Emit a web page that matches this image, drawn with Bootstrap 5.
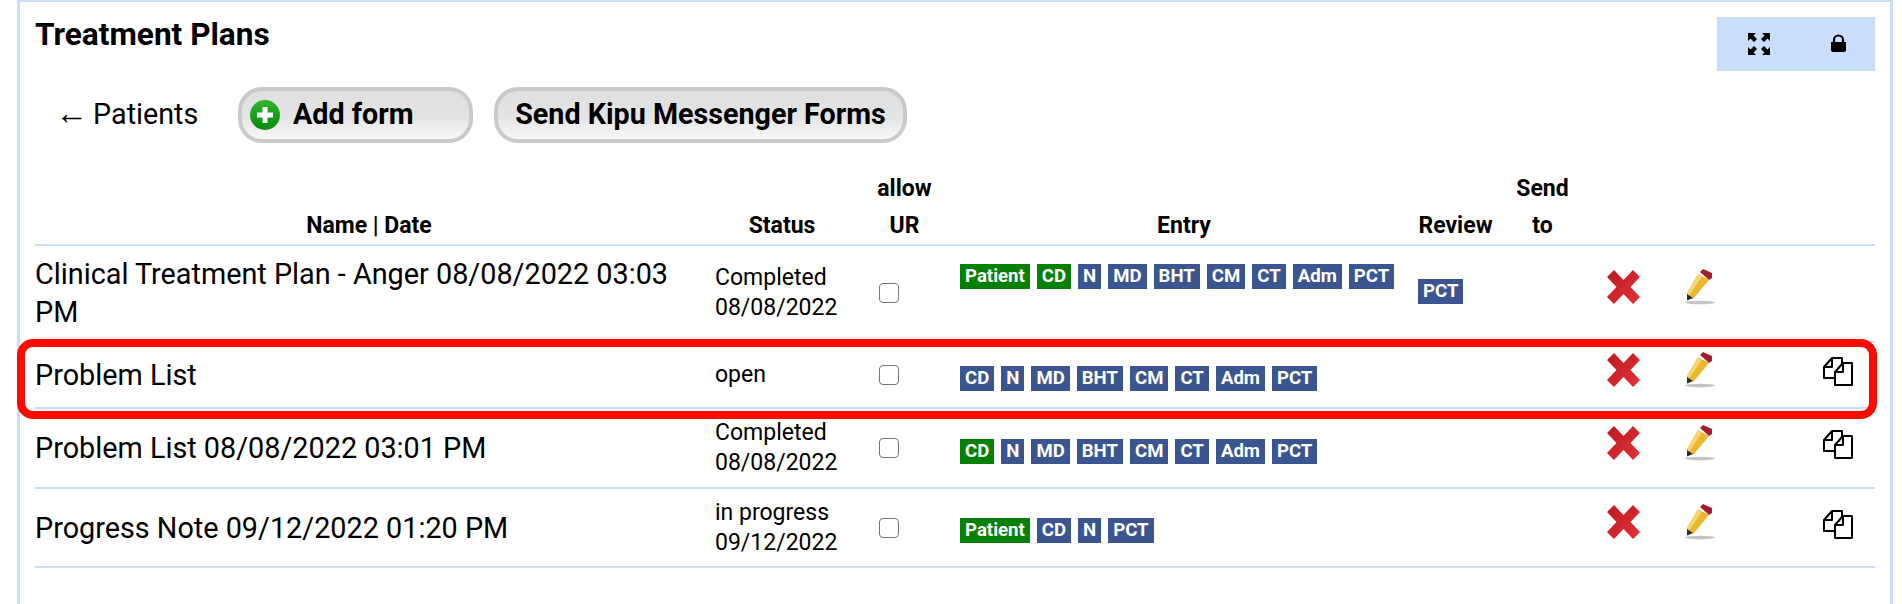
<!DOCTYPE html>
<html lang="en">
<head>
    <meta charset="UTF-8">
    <title>Treatment Plans</title>
    <link href="https://cdn.jsdelivr.net/npm/bootstrap@5.3.0/dist/css/bootstrap.min.css" rel="stylesheet">
    <style>
        body { font-family: Roboto, "Liberation Sans", sans-serif; color: #000; background: #fff; overflow: hidden; }
        .panel-box { margin-left: 17px; width: 1876px; height: 604px; border: 3px solid #c9defb; border-top-width: 2px; border-bottom: 0; padding: 0 15px; }
        .panel-title { font-size: 31.6px; font-weight: 700; line-height: 34px; margin: 0; padding-top: 16px; }
        .tool-box { width: 158px; height: 54px; background: #c9defb; margin-top: 15px; }
        .expand-icon { margin-left: 30px; }
        .lock-icon { margin-left: 60px; margin-bottom: 2px; }
        .top-head { height: 85px; }
        .back-link { font-size: 28.7px; width: 203px; padding-left: 20px; color: #000; text-decoration: none; white-space: nowrap; }
        .back-arrow { font-size: 33px; line-height: 1; margin-right: -2px; }
        .pill-btn { height: 56px; border: 4px solid #cacaca; border-radius: 24px; background: linear-gradient(#dfdfdf, #e4e4e4 55%, #f8f8f8); font-size: 28.7px; font-weight: 700; color: #000; padding: 0; }
        .pill-add { width: 235px; padding-left: 8px; gap: 13px; }
        .pill-send { width: 413px; margin-left: 21px; justify-content: center; }
        .plan-wrap { position: relative; }
        .plan-table { table-layout: fixed; width: 1840px; margin: 0; color: #000; }
        .col-name { width: 668px; }
        .col-status { width: 158px; }
        .col-ur { width: 87px; }
        .col-entry { width: 458px; }
        .col-review { width: 99px; }
        .col-send { width: 75px; }
        .col-del { width: 91px; }
        .col-edit { width: 140px; }
        .col-copy { width: 64px; }
        .plan-table th { font-size: 23px; font-weight: 700; line-height: 37px; text-align: center; vertical-align: bottom; padding: 0 4px; border-bottom: 2px solid #c9defb; height: 102px; }
        .plan-table th.entry-th { padding: 0 0 0 14px; }
        .plan-table td { padding: 0 12px; vertical-align: middle; border-bottom: 2px solid #c9defb; }
        .row-a { height: 97px; }
        .row-b { height: 66px; }
        .row-c { height: 80px; }
        .row-d { height: 79px; }
        .row-a td { padding-bottom: 2px; }
        .plan-table td.plan-name { font-size: 28.8px; line-height: 38px; padding-left: 0; }
        .plan-status { font-size: 23px; line-height: 30px; }
        .plan-table td.plan-check { padding-left: 18px; }
        .plan-check input { display: block; width: 20px; height: 20px; margin: 0; border: 1.5px solid #767676; border-radius: 4px; appearance: none; background: #fff; }
        .tag-list { display: flex; gap: 7px; }
        .tag-item { display: block; height: 25px; line-height: 25px; padding: 0 5px; background: #3b5590; color: #fff; font-size: 18.6px; font-weight: 700; text-align: center; }
        .tag-item.is-done { background: #068006; }
        .plan-table td.tags-low { padding-top: 6px; }
        .plan-table td.tags-high { padding-bottom: 34px; }
        .plan-table td.review-low { padding-bottom: 5px; }
        .row-icon { display: block; margin-bottom: 11px; filter: blur(.5px); }
        .row-copy { display: block; margin-bottom: 7px; }
        .plan-table td.x-cell { padding-left: 27px; }
        .red-mark { position: absolute; left: -18px; top: 196px; width: 1860px; height: 80px; border: 8px solid #ff0a00; border-radius: 16px; pointer-events: none; }
    </style>
</head>
<body>
    <svg width="0" height="0" class="position-absolute">
        <defs>
            <linearGradient id="rd" x1="0" y1="0" x2="1" y2="1"><stop offset="0" stop-color="#b81c1c"/><stop offset="1" stop-color="#e6303a"/></linearGradient>
            <linearGradient id="gr" x1="0" y1="0" x2="0" y2="1"><stop offset="0" stop-color="#2fb52f"/><stop offset="1" stop-color="#058a0c"/></linearGradient>
            <symbol id="del-icon" viewBox="0 0 33 34"><path d="M0 7l7-7 9.500 10L26 0l7 7-9.500 10L33 27l-7 7-9.500-10L7 34l-7-7 9.500-10z" fill="url(#rd)"/></symbol>
            <symbol id="edit-icon" viewBox="0 0 32 36"><ellipse cx="17" cy="33.500" rx="15" ry="1.800" fill="#c4c4c4"/><path d="M15 5l11 6-15 18-7 2v-7z" fill="#edb62f"/><path d="M15 5l4 2.500L6 27l-2 4v-7z" fill="#f6d574"/><path d="M17 3l3-3 9 4v5l-3 2z" fill="#a31f2e"/><path d="M4 25l6 4-6 2.500z" fill="#2b2b2b"/></symbol>
            <symbol id="copy-icon" viewBox="0 0 30 29"><g fill="#fff" stroke="#000" stroke-width="2" stroke-linejoin="round"><path d="M19 7V1H9L1 10v11h11z"/><path d="M9 1v9H1" fill="none"/><path d="M20 6h9v22H12V15z"/><path d="M20 6v9h-8" fill="none"/></g></symbol>
        </defs>
    </svg>
    <div class="panel-box">
        <div class="d-flex justify-content-between align-items-start top-head">
            <h1 class="panel-title">Treatment Plans</h1>
            <div class="tool-box d-flex align-items-center">
                <svg class="expand-icon" width="24" height="24" viewBox="0 0 24 24">
                    <path d="M1 1h8L6.500 3.500 10 7 7 10 3.500 6.500 1 9zM23 1h-8l2.500 2.500L14 7l3 3 3.500-3.500L23 9zM1 23h8l-2.500-2.500L10 17l-3-3-3.500 3.500L1 15zM23 23h-8l2.500-2.500L14 17l3-3 3.500 3.500L23 15z" fill="#000"/>
                </svg>
                <svg class="lock-icon" width="15" height="18" viewBox="0 0 15 18">
                    <path d="M0 8h15v8a2 2 0 0 1-2 2H2a2 2 0 0 1-2-2z" fill="#000"/>
                    <path d="M3 8V6a4.500 4.500 0 0 1 9 0v2" fill="none" stroke="#000" stroke-width="2.200"/>
                </svg>
            </div>
        </div>
        <div class="d-flex align-items-center">
            <a class="back-link" href="#"><span class="back-arrow">←</span> Patients</a>
            <button class="pill-btn pill-add d-flex align-items-center" type="button">
                <svg width="30" height="30" viewBox="0 0 30 30">
                    <circle cx="15" cy="15" r="15" fill="url(#gr)"/>
                    <path d="M12.500 7h5v5.500H23v5h-5.500V23h-5v-5.500H7v-5h5.500z" fill="#fff"/>
                </svg>
                <span>Add form</span>
            </button>
            <button class="pill-btn pill-send d-flex align-items-center" type="button">Send Kipu Messenger Forms</button>
        </div>
        <div class="plan-wrap">
            <table class="plan-table">
                <colgroup>
                    <col class="col-name"><col class="col-status"><col class="col-ur"><col class="col-entry"><col class="col-review"><col class="col-send"><col class="col-del"><col class="col-edit"><col class="col-copy">
                </colgroup>
                <thead>
                    <tr>
                        <th>Name | Date</th><th>Status</th><th>allow<br>UR</th><th class="entry-th">Entry</th><th>Review</th><th>Send<br>to</th><th></th><th></th><th></th>
                    </tr>
                </thead>
                <tbody>
                    <tr class="row-a">
                        <td class="plan-name">Clinical Treatment Plan - Anger 08/08/2022 03:03 PM</td>
                        <td class="plan-status">Completed<br>08/08/2022</td>
                        <td class="plan-check"><input type="checkbox"></td>
                        <td class="tags-high"><div class="tag-list"><span class="tag-item is-done">Patient</span><span class="tag-item is-done">CD</span><span class="tag-item">N</span><span class="tag-item">MD</span><span class="tag-item">BHT</span><span class="tag-item">CM</span><span class="tag-item">CT</span><span class="tag-item">Adm</span><span class="tag-item">PCT</span></div></td>
                        <td class="review-low"><div class="tag-list"><span class="tag-item">PCT</span></div></td>
                        <td></td>
                        <td class="x-cell"><svg class="row-icon" width="33" height="34"><use href="#del-icon"/></svg></td>
                        <td><svg class="row-icon" width="32" height="36"><use href="#edit-icon"/></svg></td>
                        <td></td>
                    </tr>
                    <tr class="row-b">
                        <td class="plan-name">Problem List</td>
                        <td class="plan-status">open</td>
                        <td class="plan-check"><input type="checkbox"></td>
                        <td class="tags-low"><div class="tag-list"><span class="tag-item">CD</span><span class="tag-item">N</span><span class="tag-item">MD</span><span class="tag-item">BHT</span><span class="tag-item">CM</span><span class="tag-item">CT</span><span class="tag-item">Adm</span><span class="tag-item">PCT</span></div></td>
                        <td></td>
                        <td></td>
                        <td class="x-cell"><svg class="row-icon" width="33" height="34"><use href="#del-icon"/></svg></td>
                        <td><svg class="row-icon" width="32" height="36"><use href="#edit-icon"/></svg></td>
                        <td><svg class="row-copy" width="30" height="29"><use href="#copy-icon"/></svg></td>
                    </tr>
                    <tr class="row-c">
                        <td class="plan-name">Problem List 08/08/2022 03:01 PM</td>
                        <td class="plan-status">Completed<br>08/08/2022</td>
                        <td class="plan-check"><input type="checkbox"></td>
                        <td class="tags-low"><div class="tag-list"><span class="tag-item is-done">CD</span><span class="tag-item">N</span><span class="tag-item">MD</span><span class="tag-item">BHT</span><span class="tag-item">CM</span><span class="tag-item">CT</span><span class="tag-item">Adm</span><span class="tag-item">PCT</span></div></td>
                        <td></td>
                        <td></td>
                        <td class="x-cell"><svg class="row-icon" width="33" height="34"><use href="#del-icon"/></svg></td>
                        <td><svg class="row-icon" width="32" height="36"><use href="#edit-icon"/></svg></td>
                        <td><svg class="row-copy" width="30" height="29"><use href="#copy-icon"/></svg></td>
                    </tr>
                    <tr class="row-d">
                        <td class="plan-name">Progress Note 09/12/2022 01:20 PM</td>
                        <td class="plan-status">in progress<br>09/12/2022</td>
                        <td class="plan-check"><input type="checkbox"></td>
                        <td class="tags-low"><div class="tag-list"><span class="tag-item is-done">Patient</span><span class="tag-item">CD</span><span class="tag-item">N</span><span class="tag-item">PCT</span></div></td>
                        <td></td>
                        <td></td>
                        <td class="x-cell"><svg class="row-icon" width="33" height="34"><use href="#del-icon"/></svg></td>
                        <td><svg class="row-icon" width="32" height="36"><use href="#edit-icon"/></svg></td>
                        <td><svg class="row-copy" width="30" height="29"><use href="#copy-icon"/></svg></td>
                    </tr>
                </tbody>
            </table>
            <div class="red-mark"></div>
        </div>
    </div>
    <script src="https://cdn.jsdelivr.net/npm/bootstrap@5.3.0/dist/js/bootstrap.bundle.min.js"></script>
</body>
</html>
